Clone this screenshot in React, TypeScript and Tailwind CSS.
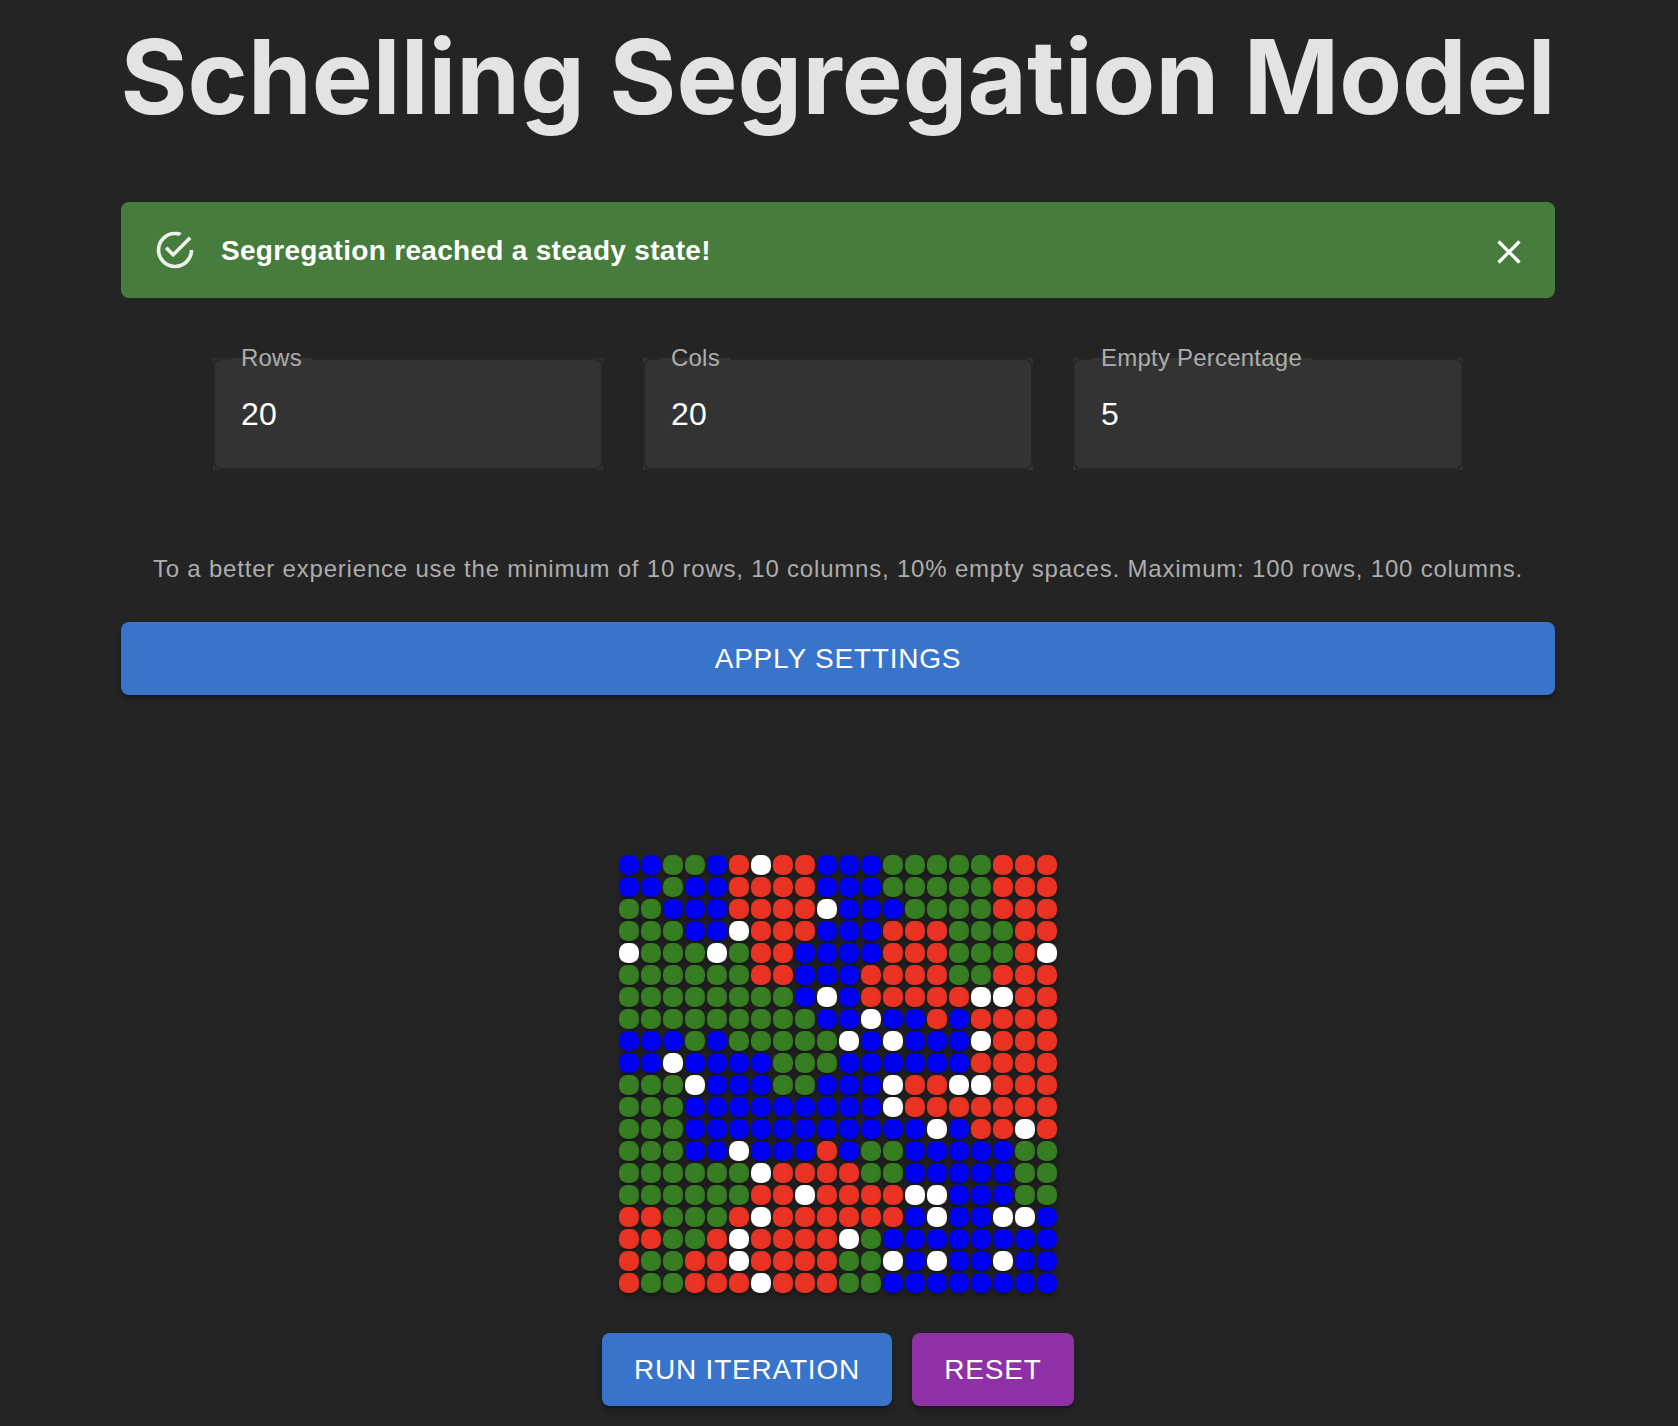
import React from "react";

const GRID = [
  "BBGGBRWRRBBBGGGGGRRR",
  "BBGBBRRRRBBBGGGGGRRR",
  "GGBBBRRRRWBBBGGGGRRR",
  "GGGBBWRRRBBBRRRGGGRR",
  "WGGGWGRRBBBBRRRGGGRW",
  "GGGGGGRRBBBRRRRGGRRR",
  "GGGGGGGGBWBRRRRRWWRR",
  "GGGGGGGGGBBWBBRBRRRR",
  "BBBGBGGGGGWBWBBBWRRR",
  "BBWBBBBGGGBBBBBBRRRR",
  "GGGWBBBGGBBBWRRWWRRR",
  "GGGBBBBBBBBBWRRRRRRR",
  "GGGBBBBBBBBBBBWBRRWR",
  "GGGBBWBBBRBGGBBBBBGG",
  "GGGGGGWRRRRGGBBBBBGG",
  "GGGGGGRRWRRRRWWBBBGG",
  "RRGGGRWRRRRRRBWBBWWB",
  "RRGGRWRRRRWGBBBBBBBB",
  "RGGRRWRRRRGGWBWBBWBB",
  "RGGRRRWRRRGGBBBBBBBB",
];

const CELL: Record<string, string> = {
  B: "bg-[#0000f5]",
  G: "bg-[#377d22]",
  R: "bg-[#ea3323]",
  W: "bg-white",
};

const SHADOW =
  "shadow-[0_6px_2px_-4px_rgba(0,0,0,0.2),0_4px_4px_0_rgba(0,0,0,0.14),0_2px_10px_0_rgba(0,0,0,0.12)]";

function Field({ label, value }: { label: string; value: string }) {
  return (
    <div className="relative h-[112px] w-[390px] bg-[#333333]">
      <input
        aria-label={label}
        defaultValue={value}
        className="h-full w-full bg-transparent pr-7 pl-7 text-[32px] tracking-[0.3px] text-white outline-none"
      />
      <fieldset className="pointer-events-none absolute inset-x-0 -top-[10px] bottom-0 m-0 min-w-0 rounded-lg border-2 border-[#272727] px-4">
        <legend className="h-[22px] px-[10px] text-[24px] leading-[20px] tracking-[0.22px] whitespace-nowrap text-[#adadad]">
          {label}
        </legend>
      </fieldset>
    </div>
  );
}

function Button({ children, className }: { children: React.ReactNode; className: string }) {
  return (
    <button
      className={`flex h-[73px] items-center justify-center rounded-lg text-[28px] leading-[40px] tracking-[0.8px] text-white ${SHADOW} ${className}`}
    >
      {children}
    </button>
  );
}

export default function App() {
  return (
    <div className="h-[1426px] w-[1678px] overflow-hidden bg-[#242424] pl-[121px] font-['Liberation_Sans',Arial,sans-serif]">
      <main className="flex w-[1434px] flex-col items-center">
        <h1 className="mt-[21px] h-[113px] font-[Inter,sans-serif] text-[102.4px] leading-[113px] font-bold tracking-[0.1px] whitespace-nowrap text-[#e3e3e3]">
          Schelling Segregation Model
        </h1>

        <div className="mt-[68px] flex h-24 w-full items-center rounded-lg bg-[#467c3c] px-8 text-white">
          <svg viewBox="0 0 24 24" className="h-11 w-11 shrink-0 opacity-90" fill="currentColor">
            <path d="M20,12A8,8 0 0,1 12,20A8,8 0 0,1 4,12A8,8 0 0,1 12,4C12.76,4 13.5,4.11 14.2, 4.31L15.77,2.74C14.61,2.26 13.34,2 12,2A10,10 0 0,0 2,12A10,10 0 0,0 12,22A10,10 0 0, 0 22,12M7.91,10.08L6.5,11.5L11,16L21,6L19.59,4.58L11,13.17L7.91,10.08Z" />
          </svg>
          <span className="ml-6 pt-[2px] text-[28px] font-bold tracking-[0.3px]">
            Segregation reached a steady state!
          </span>
          <svg viewBox="0 0 24 24" className="mt-1 -mr-[6px] ml-auto h-10 w-10" fill="currentColor">
            <path d="M19 6.41L17.59 5 12 10.59 6.41 5 5 6.41 10.59 12 5 17.59 6.41 19 12 13.41 17.59 19 19 17.59 13.41 12z" />
          </svg>
        </div>

        <div className="mt-[60px] flex gap-10">
          <Field label="Rows" value="20" />
          <Field label="Cols" value="20" />
          <Field label="Empty Percentage" value="5" />
        </div>

        <p className="mt-[79px] h-10 text-[24px] leading-10 tracking-[0.8px] whitespace-nowrap text-[#adadad]">
          To a better experience use the minimum of 10 rows, 10 columns, 10% empty spaces. Maximum: 100 rows, 100 columns.
        </p>

        <Button className="mt-[33px] w-full bg-[#3874cb]">APPLY SETTINGS</Button>

        <div className="mt-40 grid grid-cols-[repeat(20,20px)] gap-[2px]">
          {GRID.flatMap((row, r) =>
            row.split("").map((c, i) => (
              <div key={`${r}-${i}`} className={`h-5 w-5 rounded-[8.5px] ${SHADOW} ${CELL[c]}`} />
            )),
          )}
        </div>

        <div className="mt-10 flex gap-5">
          <Button className="w-[290px] bg-[#3874cb]">RUN ITERATION</Button>
          <Button className="w-[162px] bg-[#8f30a6]">RESET</Button>
        </div>
      </main>
    </div>
  );
}
